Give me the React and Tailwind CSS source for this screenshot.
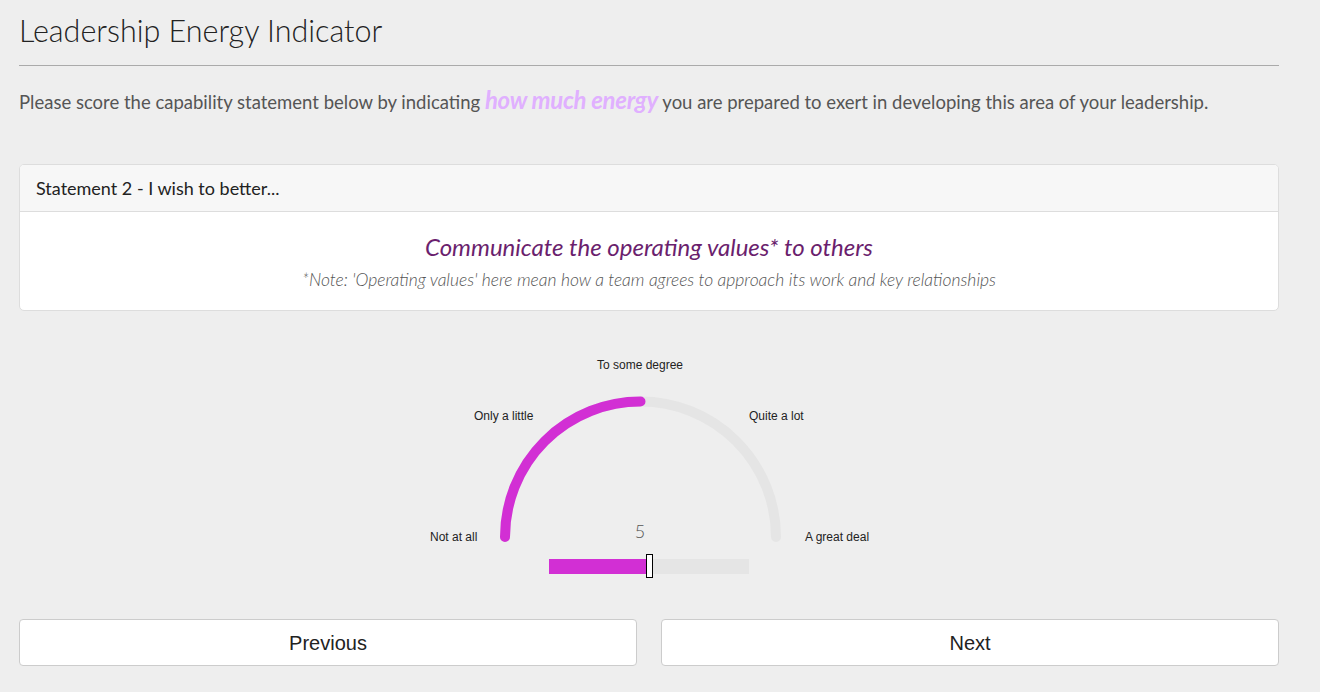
export default function App() {
  const cx = 230.5;
  const cy = 182;
  const r = 135.5;
  const arc = `M ${cx - r} ${cy} A ${r} ${r} 0 0 1 ${cx + r} ${cy}`;
  const half = `M ${cx - r} ${cy} A ${r} ${r} 0 0 1 ${cx} ${cy - r}`;
  return (
    <div className="min-h-[692px] w-full bg-[#eeeeee] text-[#333]" style={{ fontFamily: "Lato, 'Open Sans', sans-serif" }}>
      <div className="w-[1260px] ml-[19px]">
        <h1 className="pt-[8px] text-[30.5px] leading-[44px] font-light text-[#222]">Leadership Energy Indicator</h1>
        <div className="mt-[13px] h-px bg-[#aaaaaa]" />
        <p className="mt-[21px] text-[18.5px] leading-[26px] text-[#555]">
          Please score the capability statement below by indicating{" "}
          <span className="italic font-bold text-[24px] text-[#e0b0ff] tracking-[-0.3px]">how much energy</span> you are prepared to exert in developing this area of your leadership.
        </p>
        <div className="mt-[49px] rounded-[5px] border border-[#dddddd] bg-white overflow-hidden">
          <div className="h-[47px] bg-[#f7f7f7] border-b border-[#dddddd] px-[16px] flex items-center text-[18px] text-[#222]">
            Statement 2 - I wish to better...
          </div>
          <div className="pt-[19px] pb-[18px] text-center">
            <div className="text-[24px] leading-[32px] italic text-[#6b1f6e]">Communicate the operating values* to others</div>
            <div className="text-[17.5px] leading-[24px] italic font-light text-[#555] mt-[5px]">*Note: 'Operating values' here mean how a team agrees to approach its work and key relationships</div>
          </div>
        </div>
        <div className="mt-[44px] flex pl-[391px]">
          <div className="relative w-[460px] h-[225px]" style={{ fontFamily: "'Liberation Sans', Arial, sans-serif" }}>
            <svg className="absolute inset-0" width="460" height="225" viewBox="0 0 460 225">
              <path d={arc} fill="none" stroke="#e5e5e5" strokeWidth="10" strokeLinecap="round" />
              <path d={half} fill="none" stroke="#d22fd4" strokeWidth="10" strokeLinecap="round" />
            </svg>
            <div className="absolute left-0 right-0 top-[3px] text-center text-[12px] leading-[14px] text-[#222]">To some degree</div>
            <div className="absolute left-[64px] top-[54px] text-[12px] leading-[14px] text-[#222]">Only a little</div>
            <div className="absolute left-[339px] top-[54px] text-[12px] leading-[14px] text-[#222]">Quite a lot</div>
            <div className="absolute left-[20px] top-[175px] text-[12px] leading-[14px] text-[#222]">Not at all</div>
            <div className="absolute left-[395px] top-[175px] text-[12px] leading-[14px] text-[#222]">A great deal</div>
            <div className="absolute left-0 right-0 top-[164px] text-center text-[18px] leading-[24px] text-[#555] font-light" style={{ fontFamily: "Lato, sans-serif" }}>5</div>
            <div className="absolute left-[139px] top-[204px] w-[200px] h-[15px] bg-[#e5e5e5]">
              <div className="h-full w-[100px] bg-[#d22fd4]" />
            </div>
            <div className="absolute left-[236px] top-[199px] w-[7px] h-[24px] bg-white border border-black" />
          </div>
        </div>
        <div className="mt-[39px] grid grid-cols-2 gap-[24px]" style={{ fontFamily: "'Liberation Sans', Arial, sans-serif" }}>
          <button className="h-[47px] bg-white border border-[#cccccc] rounded-[4px] text-[20px] text-[#222]">Previous</button>
          <button className="h-[47px] bg-white border border-[#cccccc] rounded-[4px] text-[20px] text-[#222]">Next</button>
        </div>
      </div>
    </div>
  );
}
